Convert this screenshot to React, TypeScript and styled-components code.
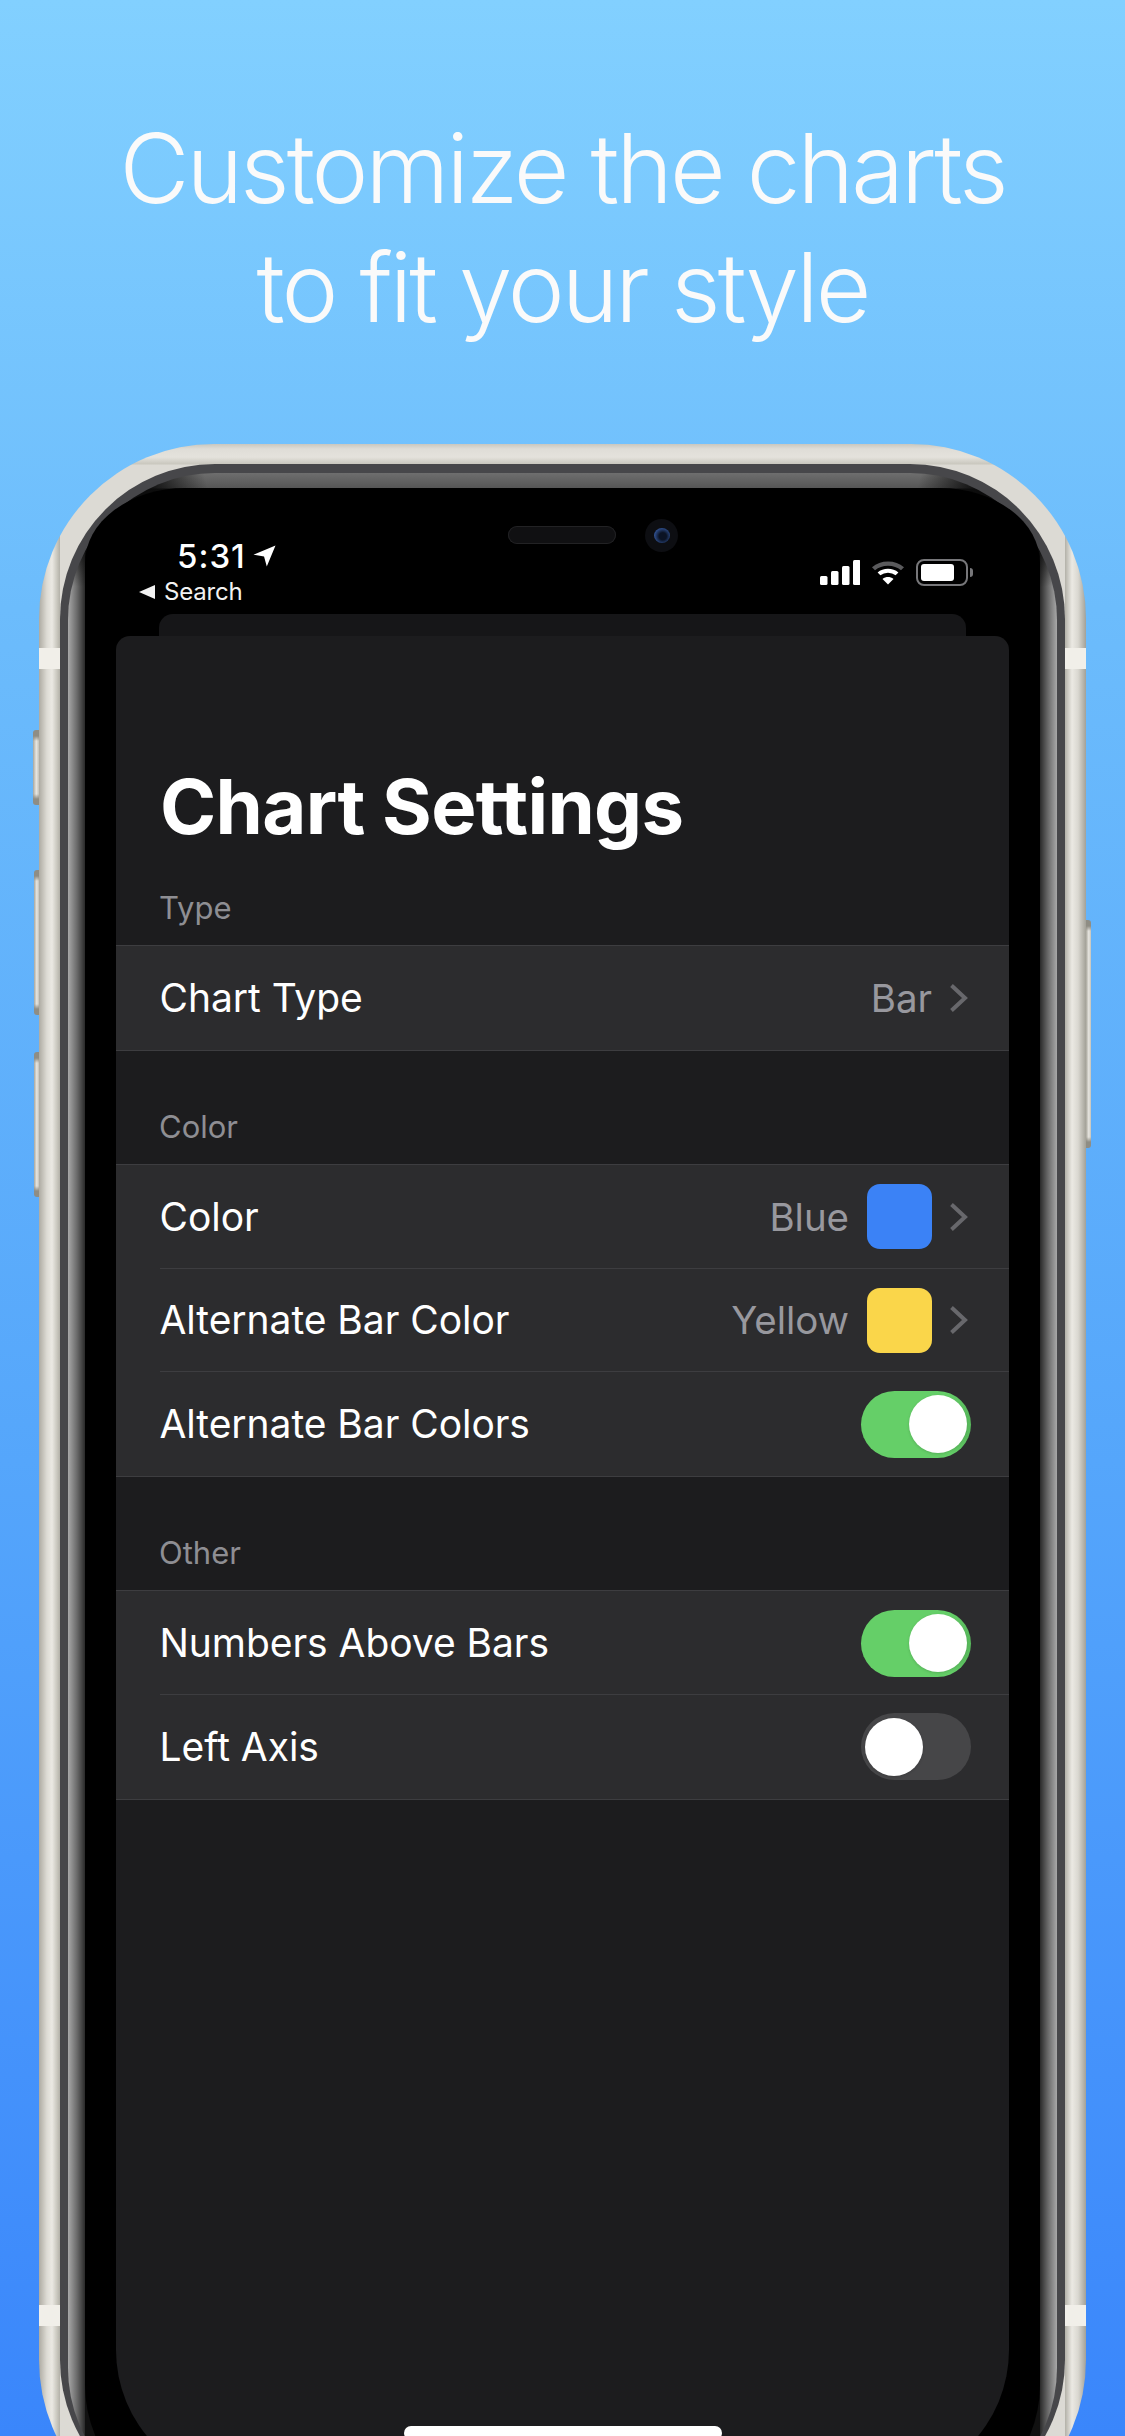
import React from "react";
import styled, { createGlobalStyle } from "styled-components";

const Global = createGlobalStyle`
  html, body { margin: 0; padding: 0; height: 2436px; overflow: hidden; }
  * { box-sizing: border-box; }
  #root { height: 2436px; }
`;

const Page = styled.div`
  width: 1125px;
  height: 2436px;
  overflow: hidden;
  background: linear-gradient(180deg, #82d0ff 0%, #6cbcfc 25%, #55a6fb 60%, #3a86fb 100%);
  font-family: Inter, "Liberation Sans", sans-serif;
`;

const Headline = styled.h1`
  margin: 0;
  height: 444px;
  padding-top: 109px;
  font-size: 96px;
  line-height: 119px;
  font-weight: 300;
  letter-spacing: -2.9px;
  color: #fafafa;
  text-align: center;
`;

const Phone = styled.div`
  position: relative;
  width: 1047px;
  height: 2091px;
  margin-left: 39px;
  padding: 20px 21px;
  border-radius: 175px;
  background:
    linear-gradient(90deg, #aeaba2 0, #dedcd5 8px, #ebe9e3 13px, #c9c7be 18px, #b3b1a8 21px, transparent 21px, transparent calc(100% - 21px), #b3b1a8 calc(100% - 21px), #ebe9e3 calc(100% - 14px), #dad8d1 calc(100% - 8px), #a3a198 100%),
    linear-gradient(180deg, #c9c7bf 0, #dfddd7 5px, #e4e2dc 13px, #c9c7be 20px, #dcdad4 21px);
`;

const AntennaBand = styled.span<{ $side: "left" | "right"; $top: number }>`
  position: absolute;
  top: ${(p) => p.$top}px;
  ${(p) => p.$side}: 0;
  width: 21px;
  height: 21px;
  background: #f1efe9;
`;

const SideButton = styled.span<{ $side: "left" | "right"; $top: number; $height: number; $width: number }>`
  position: absolute;
  top: ${(p) => p.$top}px;
  ${(p) => p.$side}: ${(p) => -p.$width}px;
  width: ${(p) => p.$width}px;
  height: ${(p) => p.$height}px;
  background:
    linear-gradient(180deg, #8f8d84 0, #8f8d84 6px, transparent 11px, transparent calc(100% - 11px), #8f8d84 calc(100% - 6px)),
    linear-gradient(90deg, #a8a69c 0, #e8e6e1 55%, #c4c2b9 100%);
  border-radius: ${(p) => (p.$side === "left" ? "3px 0 0 3px" : "0 3px 3px 0")};
`;

const Bezel = styled.div`
  height: 100%;
  padding: 9px 8px 0;
  border-radius: 155px;
  background: #47474a;
`;

const Glass = styled.div`
  height: 100%;
  padding: 15px 17px 0;
  border-radius: 147px;
  background:
    radial-gradient(ellipse 110px 90px at 30px 25px, #0c0c0c 45%, transparent 100%),
    radial-gradient(ellipse 110px 90px at calc(100% - 30px) 25px, #0c0c0c 45%, transparent 100%),
    linear-gradient(90deg, #a8a8a8 0, #6a6a6a 9px, #2a2a2a 17px, transparent 17px, transparent calc(100% - 17px), #2a2a2a calc(100% - 17px), #6a6a6a calc(100% - 9px), #a8a8a8 100%),
    linear-gradient(180deg, #6e6e6e 0, #565656 15px, #111 16px);
`;

const Screen = styled.div`
  height: 100%;
  padding: 0 31px;
  border-radius: 100px 100px 130px 130px / 75px 75px 130px 130px;
  background: #000;
  display: flex;
  flex-direction: column;
`;

const StatusBar = styled.div`
  flex: none;
  height: 126px;
  margin: 0 -31px;
  padding-left: 54px;
  display: grid;
  grid-template-columns: 369px 170px 1fr;
`;

const StatusLeft = styled.div`
  padding-top: 48px;
  color: #fff;
`;

const TimeRow = styled.div`
  display: flex;
  align-items: center;
  gap: 7px;
  height: 40px;
  padding-left: 38px;
  font-size: 33px;
  line-height: 40px;
  font-weight: 500;
  letter-spacing: 1px;
`;

const BackRow = styled.div`
  display: flex;
  align-items: center;
  gap: 9px;
  height: 30px;
  margin-top: 1px;
  font-size: 24px;
  line-height: 30px;
  font-weight: 400;
  letter-spacing: -0.2px;
  color: #f2f2f2;
`;

const Sensors = styled.div`
  display: flex;
  align-items: flex-start;
  justify-content: space-between;
  padding-top: 31px;
`;

const Speaker = styled.span`
  width: 108px;
  height: 18px;
  margin-top: 7px;
  border-radius: 9px;
  background: #101012;
  box-shadow: inset 0 0 0 1px #222224;
`;

const Camera = styled.span`
  width: 33px;
  height: 33px;
  border-radius: 50%;
  background: #0d0e12;
  display: flex;
  align-items: center;
  justify-content: center;
`;

const Lens = styled.span`
  width: 16px;
  height: 15px;
  border-radius: 50%;
  background: radial-gradient(circle at 55% 55%, #0b1324 0, #0b1324 30%, #2f4f8e 70%, #1b2c55 100%);
`;

const StatusRight = styled.div`
  display: flex;
  align-items: flex-start;
  justify-content: flex-end;
  gap: 11px;
  padding: 71px 72px 0 0;
`;

const IconSlot = styled.span`
  display: block;
  margin-top: 1px;
  line-height: 0;
`;

const BatteryShell = styled.span`
  position: relative;
  width: 52px;
  height: 27px;
  padding: 3px;
  border: 2px solid #77777a;
  border-radius: 8px;
  display: block;
  &::after {
    content: "";
    position: absolute;
    right: -7px;
    top: 7px;
    width: 3px;
    height: 9px;
    background: #77777a;
    border-radius: 0 4px 4px 0;
  }
`;

const BatteryFill = styled.span`
  display: block;
  width: 33px;
  height: 100%;
  background: #fff;
  border-radius: 3px;
`;

const BackCard = styled.div`
  flex: none;
  height: 22px;
  margin: 0 43px;
  border-radius: 14px 14px 0 0;
  background: #161618;
`;

const Card = styled.div`
  position: relative;
  flex: none;
  height: 1849px;
  padding-top: 132px;
  border-radius: 14px 14px 135px 135px;
  background: #1c1c1e;
`;

const Title = styled.h2`
  margin: 0;
  height: 102px;
  padding-left: 44px;
  font-size: 76px;
  line-height: 77px;
  font-weight: 700;
  letter-spacing: -0.65px;
  color: #fff;
`;

const Section = styled.section`
  & + & {
    margin-top: 38px;
  }
`;

const SectionLabel = styled.div`
  height: 75px;
  padding: 19px 0 0 43px;
  font-size: 31px;
  line-height: 38px;
  font-weight: 400;
  color: #8e8e93;
`;

const Rows = styled.div`
  border-top: 1px solid #3d3d40;
  border-bottom: 1px solid #3d3d40;
  background: #2c2c2e;
`;

const Row = styled.div`
  position: relative;
  height: 103.8px;
  padding: 0 38px 0 43.5px;
  display: flex;
  align-items: center;
  justify-content: space-between;
  & + &::before {
    content: "";
    position: absolute;
    top: -1px;
    left: 44px;
    right: 0;
    height: 1px;
    background: #3d3d40;
  }
`;

const RowLabel = styled.span`
  font-size: 39px;
  line-height: 46px;
  font-weight: 400;
  letter-spacing: -0.05px;
  color: #fff;
`;

const RowValue = styled.span`
  display: flex;
  align-items: center;
  padding-right: 3px;
  font-size: 38.5px;
  line-height: 46px;
  font-weight: 400;
  letter-spacing: -0.05px;
  color: #98989e;
`;

const Swatch = styled.span<{ $color: string }>`
  width: 65px;
  height: 65px;
  margin-left: 18px;
  border-radius: 13px;
  background: ${(p) => p.$color};
`;

const Chev = styled.svg`
  margin-left: 17px;
  flex: none;
`;

const Switch = styled.span<{ $on: boolean }>`
  position: relative;
  width: 110px;
  height: 67px;
  border-radius: 34px;
  background: ${(p) => (p.$on ? "linear-gradient(90deg, #65cf68 0, #65cf68 80%, #58b95c 100%)" : "#464648")};
  display: flex;
  align-items: center;
  justify-content: ${(p) => (p.$on ? "flex-end" : "flex-start")};
  padding: 0 4px;
`;

const Knob = styled.span`
  width: 58px;
  height: 58px;
  border-radius: 50%;
  background: #fff;
  box-shadow: 0 1px 3px rgba(0, 0, 0, 0.15);
`;

const HomeBar = styled.div`
  position: absolute;
  top: 1790px;
  left: 288px;
  width: 318px;
  height: 14px;
  border-radius: 7px;
  background: #fff;
`;

const Chevron = () => (
  <Chev width="19" height="30" viewBox="0 0 19 30" fill="none">
    <path d="M2.5 2.5 L16 15 L2.5 27.5" stroke="#68686c" strokeWidth="4" strokeLinejoin="miter" />
  </Chev>
);

const LocationArrow = () => (
  <svg width="23" height="22" viewBox="0 0 24 24">
    <path d="M24 0.5 L14.5 23.5 L11.5 12.5 L0 10.5 Z" fill="#fff" />
  </svg>
);

const BackTriangle = () => (
  <svg width="16" height="14" viewBox="0 0 16 14">
    <path d="M16 0 V14 L0 7 Z" fill="#f2f2f2" />
  </svg>
);

const Signal = () => (
  <svg width="40" height="25" viewBox="0 0 40 25">
    <rect x="0" y="16" width="7.5" height="9" rx="1.5" fill="#fff" />
    <rect x="11" y="11" width="7.5" height="14" rx="1.5" fill="#fff" />
    <rect x="22" y="6" width="7.5" height="19" rx="1.5" fill="#fff" />
    <rect x="33" y="0" width="7.5" height="25" rx="1.5" fill="#fff" />
  </svg>
);

const Wifi = () => (
  <svg width="34" height="25" viewBox="0 0 34 27" fill="none" preserveAspectRatio="none">
    <path d="M2.5 9.5 C10.5 2 23.5 2 31.5 9.5" stroke="#5a5a5c" strokeWidth="4.4" />
    <path d="M8 15 C13 10.5 21 10.5 26 15" stroke="#fff" strokeWidth="4.2" />
    <path d="M11.5 20.5 L17 26.5 L22.5 20.5 C19 17.8 15 17.8 11.5 20.5 Z" fill="#fff" />
  </svg>
);

const Disclosure = ({ value, color }: { value: string; color?: string }) => (
  <RowValue>
    {value}
    {color && <Swatch $color={color} />}
    <Chevron />
  </RowValue>
);

const Toggle = ({ on }: { on: boolean }) => (
  <Switch $on={on}>
    <Knob />
  </Switch>
);

export default function App() {
  return (
    <Page>
      <Global />
      <Headline>
        Customize the charts
        <br />
        to fit your style
      </Headline>
      <Phone>
        <AntennaBand $side="left" $top={204} />
        <AntennaBand $side="right" $top={204} />
        <AntennaBand $side="left" $top={1861} />
        <AntennaBand $side="right" $top={1861} />
        <SideButton $side="left" $top={286} $height={75} $width={6} />
        <SideButton $side="left" $top={426} $height={145} $width={5} />
        <SideButton $side="left" $top={608} $height={145} $width={5} />
        <SideButton $side="right" $top={476} $height={228} $width={5} />
        <Bezel>
          <Glass>
            <Screen>
              <StatusBar>
                <StatusLeft>
                  <TimeRow>
                    5:31
                    <LocationArrow />
                  </TimeRow>
                  <BackRow>
                    <BackTriangle />
                    Search
                  </BackRow>
                </StatusLeft>
                <Sensors>
                  <Speaker />
                  <Camera>
                    <Lens />
                  </Camera>
                </Sensors>
                <StatusRight>
                  <IconSlot>
                    <Signal />
                  </IconSlot>
                  <IconSlot>
                    <Wifi />
                  </IconSlot>
                  <BatteryShell>
                    <BatteryFill />
                  </BatteryShell>
                </StatusRight>
              </StatusBar>
              <BackCard />
              <Card>
                <Title>Chart Settings</Title>
                <Section>
                  <SectionLabel>Type</SectionLabel>
                  <Rows>
                    <Row>
                      <RowLabel>Chart Type</RowLabel>
                      <Disclosure value="Bar" />
                    </Row>
                  </Rows>
                </Section>
                <Section>
                  <SectionLabel>Color</SectionLabel>
                  <Rows>
                    <Row>
                      <RowLabel>Color</RowLabel>
                      <Disclosure value="Blue" color="#3b82f6" />
                    </Row>
                    <Row>
                      <RowLabel>Alternate Bar Color</RowLabel>
                      <Disclosure value="Yellow" color="#fad64a" />
                    </Row>
                    <Row>
                      <RowLabel>Alternate Bar Colors</RowLabel>
                      <Toggle on />
                    </Row>
                  </Rows>
                </Section>
                <Section>
                  <SectionLabel>Other</SectionLabel>
                  <Rows>
                    <Row>
                      <RowLabel>Numbers Above Bars</RowLabel>
                      <Toggle on />
                    </Row>
                    <Row>
                      <RowLabel>Left Axis</RowLabel>
                      <Toggle on={false} />
                    </Row>
                  </Rows>
                </Section>
                <HomeBar />
              </Card>
            </Screen>
          </Glass>
        </Bezel>
      </Phone>
    </Page>
  );
}
